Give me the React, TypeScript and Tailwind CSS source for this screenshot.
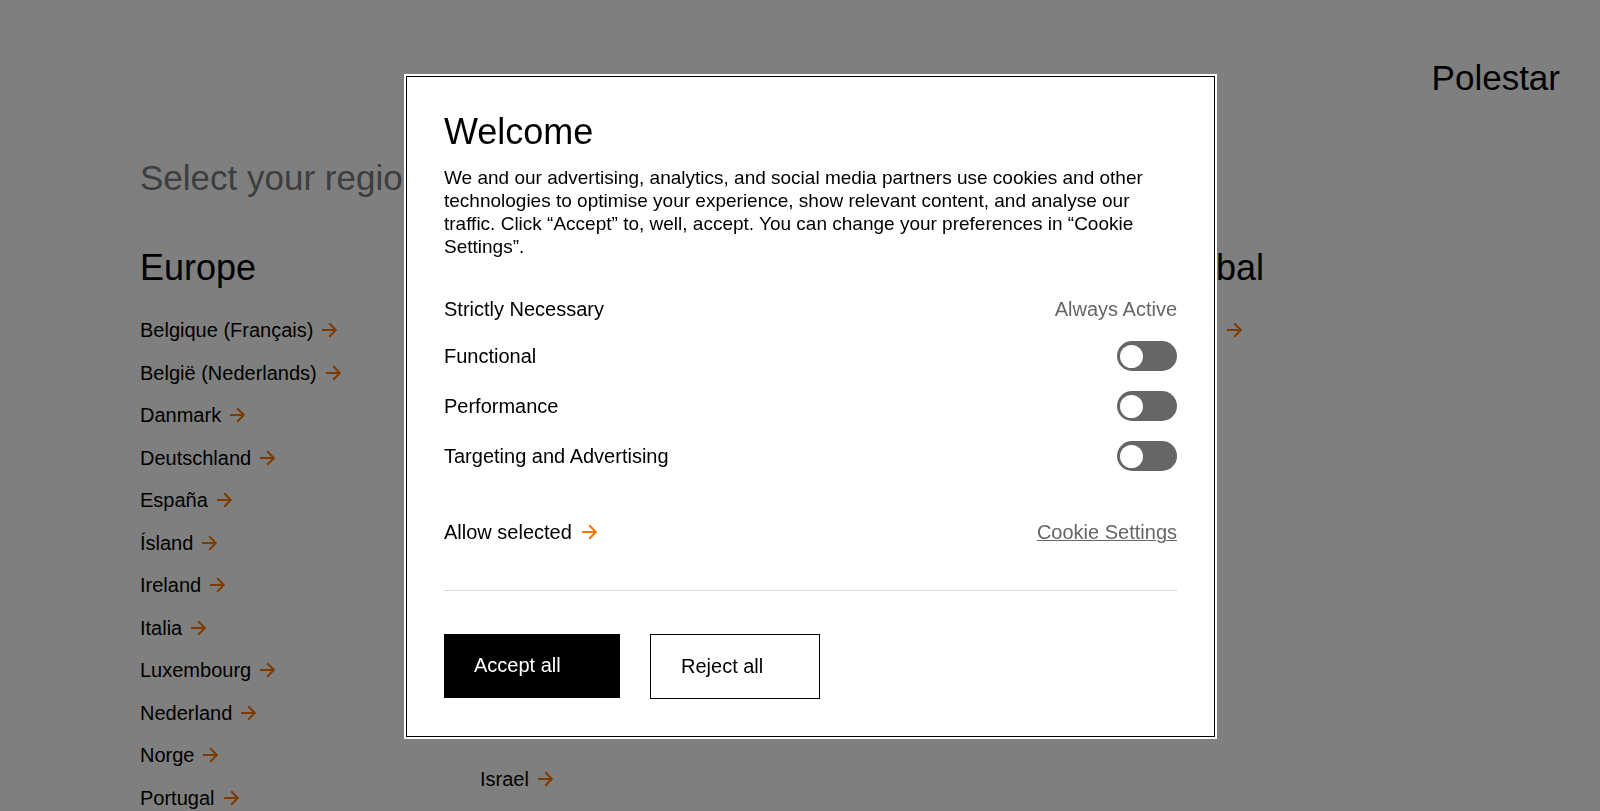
import { useState } from "react";

const europe = [
  "Belgique (Français)",
  "België (Nederlands)",
  "Danmark",
  "Deutschland",
  "España",
  "Ísland",
  "Ireland",
  "Italia",
  "Luxembourg",
  "Nederland",
  "Norge",
  "Portugal",
];

const categories = ["Functional", "Performance", "Targeting and Advertising"];

function Arrow() {
  return (
    <svg
      width="15"
      height="16"
      viewBox="0 0 15 16"
      fill="none"
      stroke="#ff7500"
      strokeWidth="2"
      aria-hidden="true"
      className="shrink-0"
    >
      <path d="M0 8h14M7.2 1.2 13.8 8l-6.6 6.8" />
    </svg>
  );
}

function RegionLink({ name }: { name: string }) {
  return (
    <a href="#" className="flex w-fit items-center gap-[9px]">
      {name}
      <Arrow />
    </a>
  );
}

function Toggle({ name }: { name: string }) {
  const [on, setOn] = useState(false);
  return (
    <label className="flex h-[30px] items-center justify-between">
      <span>{name}</span>
      <input
        type="checkbox"
        role="switch"
        checked={on}
        onChange={() => setOn(!on)}
        className="flex h-[30px] w-[60px] appearance-none items-center rounded-full bg-[#666666] px-[3px] before:size-[23px] before:rounded-full before:bg-white checked:justify-end"
      />
    </label>
  );
}

export default function App() {
  return (
    <div className="h-screen overflow-hidden bg-white font-['Liberation_Sans',Arial,sans-serif] text-[20px] leading-[22px] text-black">
      <header className="flex justify-end px-[40px] pt-[56px]">
        <a href="#" className="text-[35px] leading-[44px]">
          Polestar
        </a>
      </header>
      <main className="pt-[56px] pl-[140px]">
        <h1 className="text-[35px] leading-[44px] text-[#787c80]">Select your region</h1>
        <div className="mt-[44px] grid grid-cols-[repeat(4,340px)]">
          <section>
            <h2 className="text-[36px] leading-[48px]">Europe</h2>
            <ul className="mt-[27px] flex h-[490px] flex-col justify-between">
              {europe.map((name) => (
                <li key={name}>
                  <RegionLink name={name} />
                </li>
              ))}
            </ul>
          </section>
          <section className="pt-[524px]">
            <RegionLink name="Israel" />
          </section>
          <section className="col-start-4">
            <h2 className="text-[36px] leading-[48px]">Global</h2>
            <div className="mt-[27px]">
              <RegionLink name="Global" />
            </div>
          </section>
        </div>
      </main>

      <div className="fixed inset-0 flex items-center justify-center bg-black/50 pt-[2px] pl-[21px]">
        <div
          role="dialog"
          aria-labelledby="welcome"
          className="w-full max-w-[809px] border border-black bg-white px-[37px] pt-[35px] pb-[37px] ring-2 ring-white"
        >
          <h2 id="welcome" className="text-[36px] leading-[40px]">
            Welcome
          </h2>
          <p className="mt-[14px] text-[19px] leading-[23px]">
            We and our advertising, analytics, and social media partners use cookies and other
            technologies to optimise your experience, show relevant content, and analyse our
            traffic. Click “Accept” to, well, accept. You can change your preferences in “Cookie
            Settings”.
          </p>
          <div className="mt-[40px] flex items-center justify-between">
            <span>Strictly Necessary</span>
            <span className="text-[#666666]">Always Active</span>
          </div>
          <div className="mt-[21px] flex flex-col gap-[20px]">
            {categories.map((name) => (
              <Toggle key={name} name={name} />
            ))}
          </div>
          <div className="mt-[50px] flex items-center justify-between">
            <button type="button" className="flex items-center gap-[10px]">
              Allow selected
              <Arrow />
            </button>
            <a href="#" className="text-[#666666] underline decoration-1">
              Cookie Settings
            </a>
          </div>
          <hr className="mt-[47px] border-[#d9d9d9]" />
          <div className="mt-[43px] flex gap-[30px]">
            <button
              type="button"
              className="h-[64px] w-[176px] bg-black pb-[2px] pl-[30px] text-left text-white"
            >
              Accept all
            </button>
            <button
              type="button"
              className="h-[65px] w-[170px] border border-black pb-[2px] pl-[30px] text-left"
            >
              Reject all
            </button>
          </div>
        </div>
      </div>
    </div>
  );
}
